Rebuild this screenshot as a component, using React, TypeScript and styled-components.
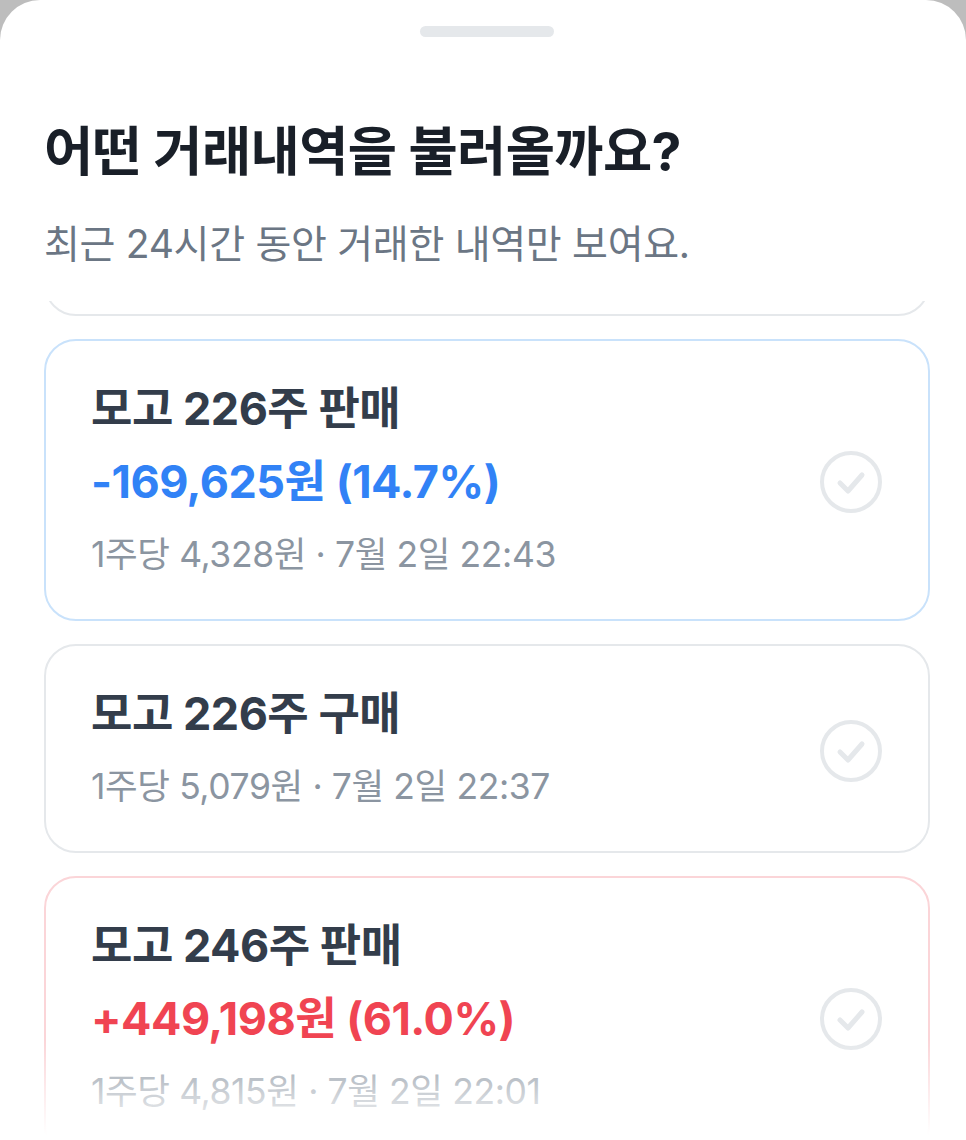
import { useLayoutEffect, useRef } from "react";
import styled, { createGlobalStyle } from "styled-components";

const GlobalStyle = createGlobalStyle`
  html, body {
    margin: 0;
    padding: 0;
    background: #bdbdbd;
  }
  body {
    font-family: "Inter", "Noto Sans CJK KR", sans-serif;
    -webkit-font-smoothing: antialiased;
  }
`;

const Sheet = styled.div`
  height: 100vh;
  display: flex;
  flex-direction: column;
  background: #fff;
  border-radius: 40px 40px 0 0;
  overflow: hidden;
`;

const Handle = styled.div`
  width: 134px;
  height: 11px;
  margin: 26px auto 0;
  border-radius: 6px;
  background: #e5e8eb;
  flex-shrink: 0;
  transform: translateX(4px);
`;

const Header = styled.div`
  padding: 0 36px 0 44px;
  flex-shrink: 0;
`;

const Title = styled.h1`
  margin: 76px 0 0;
  font-size: 53.5px;
  line-height: 78px;
  font-weight: 700;
  letter-spacing: -0.6px;
  color: #191f28;
`;

const Subtitle = styled.p`
  margin: 24px 0 0;
  font-size: 39px;
  line-height: 58px;
  font-weight: 400;
  letter-spacing: -0.3px;
  color: #6b7684;
`;

const ListArea = styled.div`
  position: relative;
  flex: 1;
  min-height: 0;
  margin-top: 28px;
  &::after {
    content: "";
    position: absolute;
    left: 0;
    right: 0;
    bottom: 0;
    height: 100px;
    background: linear-gradient(rgba(255, 255, 255, 0), #fff 95%);
    pointer-events: none;
  }
`;

const List = styled.div`
  height: 100%;
  overflow-y: auto;
  scrollbar-width: none;
  padding: 0 36px 0 44px;
  display: flex;
  flex-direction: column;
  gap: 23px;
  &::-webkit-scrollbar {
    display: none;
  }
`;

type Tone = "down" | "up" | "none";

const borderColors: Record<Tone, string> = {
  down: "#c9e2fb",
  up: "#fbd5d8",
  none: "#e5e8eb",
};

const Card = styled.button<{ $tone: Tone }>`
  flex-shrink: 0;
  display: flex;
  align-items: center;
  justify-content: space-between;
  width: 100%;
  padding: 40px 45px 36px;
  border: 2px solid ${(p) => borderColors[p.$tone]};
  border-radius: 32px;
  background: #fff;
  font-family: inherit;
  text-align: left;
  cursor: pointer;
`;

const Info = styled.div`
  display: flex;
  flex-direction: column;
  gap: 17px;
`;

const TradeTitle = styled.div`
  font-size: 45px;
  line-height: 56px;
  font-weight: 700;
  letter-spacing: -0.5px;
  color: #333d4b;
`;

const Profit = styled.div<{ $tone: Tone }>`
  font-size: 45px;
  line-height: 56px;
  font-weight: 700;
  letter-spacing: -0.5px;
  color: ${(p) => (p.$tone === "up" ? "#f04452" : "#3182f6")};
`;

const Meta = styled.div`
  font-size: 35.5px;
  line-height: 56px;
  font-weight: 400;
  letter-spacing: -0.4px;
  color: #8b95a1;
`;

const CheckIcon = () => (
  <svg width="64" height="64" viewBox="0 0 64 64" fill="none">
    <circle cx="32" cy="32" r="29" stroke="#e5e8eb" strokeWidth="4" />
    <path
      d="M21 33 L29 41 L43 25"
      stroke="#e5e8eb"
      strokeWidth="5"
      strokeLinecap="round"
      strokeLinejoin="round"
    />
  </svg>
);

const trades: {
  title: string;
  profit?: string;
  meta: string;
  tone: Tone;
}[] = [
  {
    title: "모고 20주 구매",
    meta: "1주당 5,120원 · 7월 2일 23:05",
    tone: "none",
  },
  {
    title: "모고 226주 판매",
    profit: "-169,625원 (14.7%)",
    meta: "1주당 4,328원 · 7월 2일 22:43",
    tone: "down",
  },
  {
    title: "모고 226주 구매",
    meta: "1주당 5,079원 · 7월 2일 22:37",
    tone: "none",
  },
  {
    title: "모고 246주 판매",
    profit: "+449,198원 (61.0%)",
    meta: "1주당 4,815원 · 7월 2일 22:01",
    tone: "up",
  },
  {
    title: "모고 246주 구매",
    meta: "1주당 2,990원 · 7월 2일 21:40",
    tone: "none",
  },
];

const App: React.FC = () => {
  const listRef = useRef<HTMLDivElement>(null);

  // the list is already scrolled a bit: only the bottom edge of the first card shows
  useLayoutEffect(() => {
    const list = listRef.current;
    const first = list?.firstElementChild as HTMLElement | null;
    if (list && first) list.scrollTop = first.offsetHeight - 15;
  }, []);

  return (
    <>
      <GlobalStyle />
      <Sheet>
        <Handle />
        <Header>
          <Title>어떤 거래내역을 불러올까요?</Title>
          <Subtitle>최근 24시간 동안 거래한 내역만 보여요.</Subtitle>
        </Header>
        <ListArea>
          <List ref={listRef}>
            {trades.map((trade, i) => (
              <Card key={i} type="button" $tone={trade.tone}>
                <Info>
                  <TradeTitle>{trade.title}</TradeTitle>
                  {trade.profit && (
                    <Profit $tone={trade.tone}>{trade.profit}</Profit>
                  )}
                  <Meta>{trade.meta}</Meta>
                </Info>
                <CheckIcon />
              </Card>
            ))}
          </List>
        </ListArea>
      </Sheet>
    </>
  );
};

export default App;
